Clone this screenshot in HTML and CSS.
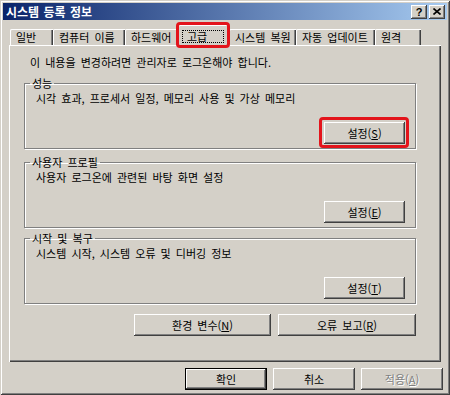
FILE: index.html
```html
<!DOCTYPE html>
<html lang="ko">
<head>
  <meta charset="UTF-8">
  <title>시스템 등록 정보</title>
  <link rel="stylesheet" href="styles.css">
</head>
<body>
  <div class="window">
    <div class="titlebar">
      <span class="title">시스템 등록 정보</span>
      <div class="caption-buttons">
        <span class="cap-btn help">?</span>
        <span class="cap-btn close">
          <svg width="8" height="7" viewBox="0 0 8 7"><path d="M0.5 0.5L7.5 6.5M7.5 0.5L0.5 6.5" stroke="#000" stroke-width="1.6" fill="none"/></svg>
        </span>
      </div>
    </div>

    <div class="content">
      <div class="tabs">
        <div class="tab tab-general">일반</div>
        <div class="tab tab-computer">컴퓨터 이름</div>
        <div class="tab tab-hardware">하드웨어</div>
        <div class="tab tab-advanced active marked"><span class="focus">고급</span></div>
        <div class="tab tab-restore">시스템 복원</div>
        <div class="tab tab-update">자동 업데이트</div>
        <div class="tab tab-remote">원격</div>
      </div>

      <div class="panel">
        <p class="notice">이 내용을 변경하려면 관리자로 로그온해야 합니다.</p>

        <fieldset class="group group-perf">
          <legend>성능</legend>
          <p class="desc">시각 효과, 프로세서 일정, 메모리 사용 및 가상 메모리</p>
          <div class="group-actions">
            <button class="btn marked">설정(<u>S</u>)</button>
          </div>
        </fieldset>

        <fieldset class="group group-profile">
          <legend>사용자 프로필</legend>
          <p class="desc">사용자 로그온에 관련된 바탕 화면 설정</p>
          <div class="group-actions">
            <button class="btn">설정(<u>E</u>)</button>
          </div>
        </fieldset>

        <fieldset class="group group-startup">
          <legend>시작 및 복구</legend>
          <p class="desc">시스템 시작, 시스템 오류 및 디버깅 정보</p>
          <div class="group-actions">
            <button class="btn">설정(<u>T</u>)</button>
          </div>
        </fieldset>

        <div class="panel-actions">
          <button class="btn btn-wide btn-env">환경 변수(<u>N</u>)</button>
          <button class="btn btn-wide btn-report">오류 보고(<u>R</u>)</button>
        </div>
      </div>

      <div class="dialog-actions">
        <button class="btn btn-dialog default">확인</button>
        <button class="btn btn-dialog">취소</button>
        <button class="btn btn-dialog disabled">적용(<u>A</u>)</button>
      </div>
    </div>
  </div>
</body>
</html>
```

FILE: styles.css
```css
body {
  margin: 0;
  padding: 0;
  font-family: "Noto Sans CJK KR", "Noto Sans", sans-serif;
  font-size: 11px;
  line-height: 14px;
  word-spacing: 2px;
  color: #000;
  background-color: #d4d0c8;
}

.window {
  width: 450px;
  height: 395px;
  box-sizing: border-box;
  padding: 3px;
  background-color: #d4d0c8;
  box-shadow: inset 1px 1px #d4d0c8, inset -1px -1px #404040,
              inset 2px 2px #fff, inset -2px -2px #808080;
}

/* title bar */
.titlebar {
  height: 17px;
  display: flex;
  align-items: center;
  justify-content: space-between;
  padding: 0 2px 0 2px;
  background: linear-gradient(to right, #0a246a, #a6caf0);
}

.title {
  color: #fff;
  font-size: 12px;
  font-weight: bold;
  word-spacing: 1px;
  padding-left: 1px;
}

.caption-buttons {
  display: flex;
  gap: 2px;
}

.cap-btn {
  width: 16px;
  height: 14px;
  box-sizing: border-box;
  display: flex;
  align-items: center;
  justify-content: center;
  background-color: #d4d0c8;
  box-shadow: inset -1px -1px #404040, inset 1px 1px #fff,
              inset -2px -2px #808080;
  font-family: "Liberation Sans", sans-serif;
  font-weight: bold;
  font-size: 11px;
  line-height: 14px;
}

/* tabs */
.content {
  padding: 0 6px;
}

.tabs {
  display: flex;
  align-items: flex-end;
  height: 20px;
  margin-top: 5px;
  padding-left: 1px;
}

.tab {
  height: 16px;
  box-sizing: border-box;
  padding-left: 6px;
  line-height: 16px;
  white-space: nowrap;
  border-top-left-radius: 2px;
  box-shadow: inset 1px 0 #fff, inset 0 1px #fff,
              inset -1px 0 #404040, inset -2px 0 #808080;
}

.tab-general { width: 43px; }
.tab-computer { width: 72px; }
.tab-hardware { width: 53px; }
.tab-restore { width: 67px; }
.tab-update { width: 79px; }
.tab-remote { width: 46px; }

.tab-advanced {
  width: 51px;
}

.tab.active {
  height: 21px;
  margin-bottom: -1px;
  padding-left: 5px;
  padding-top: 3px;
  position: relative;
  z-index: 1;
  background-color: #d4d0c8;
  box-shadow: inset 1px 0 #fff, inset 0 1px #fff,
              inset -1px 0 #404040, inset -2px 0 #808080;
}

.focus {
  display: inline-block;
  line-height: 11px;
  padding: 0 16px 0 4px;
  outline: 1px dotted #000;
}

/* red highlight boxes */
.marked {
  position: relative;
}

.marked::after {
  content: "";
  position: absolute;
  border: 3px solid #e3141b;
  border-radius: 4px;
  pointer-events: none;
}

.tab.marked::after {
  top: -3px;
  left: -2px;
  right: -1px;
  bottom: -2px;
}

.btn.marked::after {
  top: -5px;
  left: -5px;
  right: -4px;
  bottom: -4px;
}

/* property page */
.panel {
  height: 317px;
  box-sizing: border-box;
  padding: 10px 25px 0 15px;
  box-shadow: inset 1px 1px #fff, inset -1px -1px #404040,
              inset -2px -2px #808080;
}

.notice {
  margin: 0 0 0 6px;
}

.group {
  width: 392px;
  height: 73px;
  box-sizing: border-box;
  margin: 7px 0 0 0;
  padding: 0 10px 4px 0;
  border: 1px solid #808080;
  box-shadow: 1px 1px 0 #fff, inset 1px 1px 0 #fff;
  display: flex;
  flex-direction: column;
}

.group-profile { margin-top: 6px; }
.group-startup { margin-top: 3px; }

.group legend {
  margin-left: 5px;
  padding: 0 2px;
}

.desc {
  margin: 1px 0 0 11px;
}

.group-actions {
  margin-top: auto;
  display: flex;
  justify-content: flex-end;
}

.btn {
  width: 82px;
  height: 22px;
  padding: 0;
  border: none;
  font-family: inherit;
  font-size: 11px;
  word-spacing: 2px;
  color: #000;
  background-color: #d4d0c8;
  box-shadow: inset -1px -1px #404040, inset 1px 1px #fff,
              inset -2px -2px #808080, inset 2px 2px #d4d0c8;
}

.group .btn {
  width: 81px;
}

.panel-actions {
  display: flex;
  justify-content: flex-end;
  gap: 7px;
  margin-top: 10px;
}

.btn-wide {
  width: 137px;
}

.btn-report {
  width: 138px;
}

.dialog-actions {
  display: flex;
  justify-content: flex-end;
  gap: 6px;
  margin: 6px -2px 0 0;
}

.btn.default {
  box-shadow: inset 0 0 0 1px #000, inset -2px -2px #404040,
              inset 2px 2px #fff, inset -3px -3px #808080;
}

.btn.disabled {
  color: #808080;
  text-shadow: 1px 1px 0 #fff;
}
```
